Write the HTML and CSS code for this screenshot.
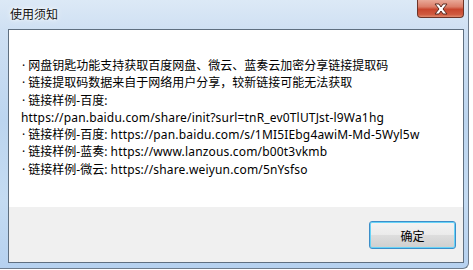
FILE: index.html
```html
<!DOCTYPE html>
<html lang="zh-CN">
<head>
<meta charset="utf-8">
<title>使用须知</title>
<link rel="stylesheet" href="styles.css">
</head>
<body>
<div class="window">
  <div class="titlebar">
    <span class="title">使用须知</span>
    <div class="close">
      <svg width="20" height="12" viewBox="0 0 20 12">
        <path d="M4 1 L8 1 L10 4 L12 1 L16 1 L12 6 L16 11 L12 11 L10 8 L8 11 L4 11 L8 6 Z" fill="#ffffff" stroke="#5a2a20" stroke-width="1" stroke-linejoin="round"/>
      </svg>
    </div>
  </div>
  <div class="client">
    <div class="content">
      <p class="line">· 网盘钥匙功能支持获取百度网盘、微云、蓝奏云加密分享链接提取码</p>
      <p class="line">· 链接提取码数据来自于网络用户分享，较新链接可能无法获取</p>
      <p class="line">· 链接样例-百度:</p>
      <p class="line url"><span class="en">https://pan.baidu.com/share/init?surl=tnR_ev0TlUTJst-l9Wa1hg</span></p>
      <p class="line">· 链接样例-百度: <span class="en">https://pan.baidu.com/s/1MI5IEbg4awiM-Md-5Wyl5w</span></p>
      <p class="line">· 链接样例-蓝奏: <span class="en">https://www.lanzous.com/b00t3vkmb</span></p>
      <p class="line">· 链接样例-微云: <span class="en">https://share.weiyun.com/5nYsfso</span></p>
    </div>
    <div class="footer">
      <button class="ok">确定</button>
    </div>
  </div>
</div>
</body>
</html>
```

FILE: styles.css
```css
html, body {
  margin: 0;
  padding: 0;
  background: #ffffff;
  width: 473px;
  height: 270px;
  overflow: hidden;
}

.window {
  box-sizing: border-box;
  width: 469px;
  height: 269px;
  padding: 0 4px 5px 8px;
  background: linear-gradient(180deg, #dce9f6 0px, #cfe0f3 30px, #bcd5ef 120px, #c4dbf2 200px, #b6d1ef 269px);
  border-right: 1px solid #6e7c8c;
  border-bottom: 1px solid #6e7c8c;
  border-bottom-right-radius: 6px;
  display: flex;
  flex-direction: column;
  font-family: "Noto Sans", "Noto Sans CJK SC", sans-serif;
}

.titlebar {
  height: 29px;
  display: flex;
  justify-content: space-between;
  align-items: flex-start;
  flex: none;
}

.title {
  margin: 5px 0 0 2px;
  font-family: "Noto Sans CJK SC", sans-serif;
  font-size: 12px;
  line-height: 17px;
  color: #101010;
  text-shadow: 0 0 6px #ffffff, 0 0 3px #ffffff;
}

.close {
  width: 47px;
  height: 18px;
  box-sizing: border-box;
  border: 1px solid #6c3428;
  border-top: none;
  border-radius: 0 0 4px 4px;
  background: linear-gradient(180deg, #e9a998 0%, #db7d68 40%, #c8462e 55%, #cf5a3f 85%, #e08a6e 100%);
  display: flex;
  align-items: center;
  justify-content: center;
}

.close svg {
  display: block;
}

.client {
  flex: 1;
  display: flex;
  flex-direction: column;
  border: 1px solid #5f6f80;
  background: #f0f0f0;
}

.content {
  height: 177px;
  box-sizing: border-box;
  background: #ffffff;
  padding: 27px 0 0 13px;
  font-size: 12px;
  color: #000000;
}

.line {
  margin: 0;
  line-height: 17.3px;
  white-space: nowrap;
}

.en {
  letter-spacing: 0.17px;
}

.url {
  margin-left: -1px;
}

.footer {
  flex: 1;
  display: flex;
  justify-content: flex-end;
  align-items: flex-start;
  padding: 14px 7px 0 0;
}

.ok {
  width: 87px;
  height: 28px;
  box-sizing: border-box;
  border: 1px solid #3c8ec9;
  border-radius: 3px;
  box-shadow: inset 0 0 0 1px #67d3f7;
  background: linear-gradient(180deg, #f3f3f3 0%, #ebebeb 48%, #dddddd 52%, #cfcfcf 100%);
  font-family: "Noto Sans CJK SC", sans-serif;
  font-size: 12px;
  color: #000000;
  padding: 0;
  margin: 0;
}
```
